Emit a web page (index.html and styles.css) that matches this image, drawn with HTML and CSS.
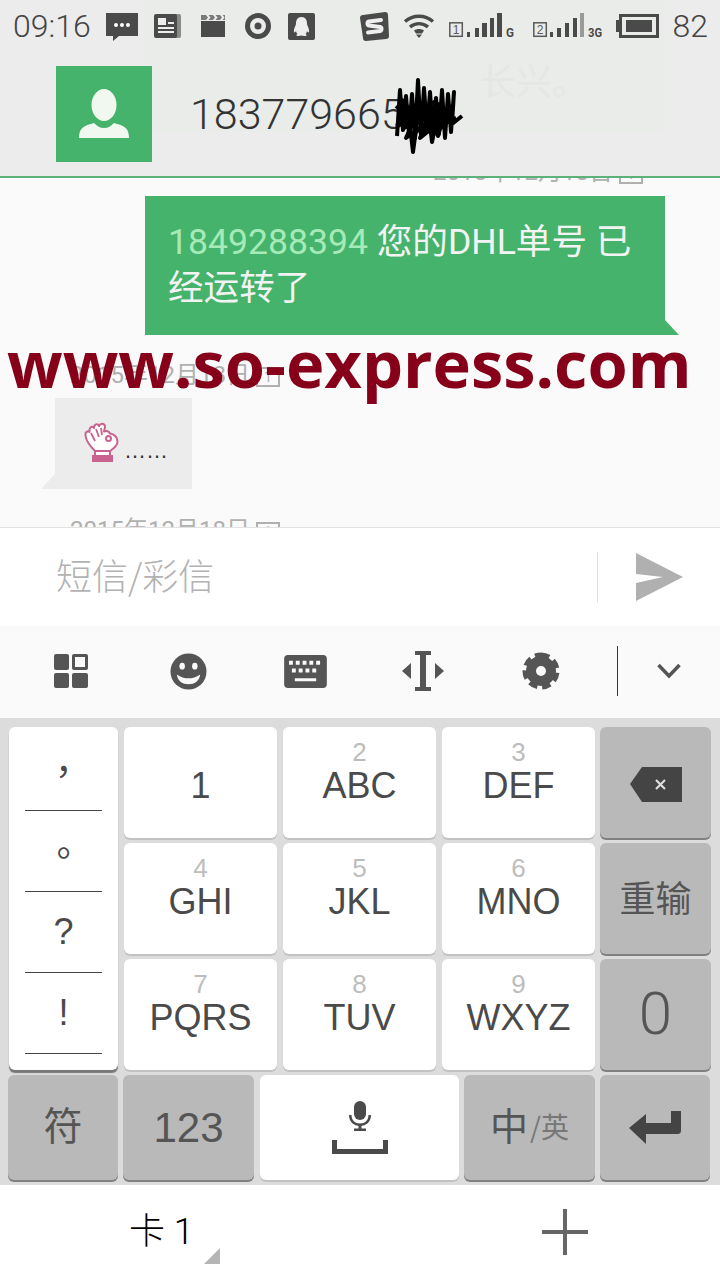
FILE: index.html
```html
<!DOCTYPE html>
<html lang="zh-CN">

<head>
    <meta charset="utf-8">
    <meta name="viewport" content="width=device-width, initial-scale=1">
    <title>短信</title>
    <link rel="stylesheet" href="styles.css">
</head>

<body>
<div class="screen">

    <div class="top">
        <div class="ghost">长兴。</div>
        <div class="status">
            <div class="status-group">
                <span class="status-text">09:16</span>
                <svg class="i-msg" width="32" height="28" viewBox="0 0 32 28"><path fill="#4a4a4a" d="M0 0h32v23H13l-6 5v-5H0z"/><circle cx="10" cy="12" r="2" fill="#fff"/><circle cx="16" cy="12" r="2" fill="#fff"/><circle cx="22" cy="12" r="2" fill="#fff"/></svg>
                <svg class="i-news" width="27" height="24" viewBox="0 0 27 24"><rect x="3" width="24" height="24" rx="2" fill="#8a8a8a"/><rect width="23" height="24" rx="2" fill="#4a4a4a"/><path fill="#eee" d="M4 4h8v7H4zM14 8h6v2h-6zM4 13h16v2H4zM4 17h16v2H4z"/></svg>
                <svg class="i-film" width="24" height="22" viewBox="0 0 24 22"><path fill="#4a4a4a" d="M0 6h24v16H0z"/><path fill="#7a7a7a" d="M0 0h24v5H0z"/><path fill="#eee" d="M5 0l2 2.500L5 5H7.500l2-2.500-2-2.500zM12 0l2 2.500L12 5h2.500l2-2.500-2-2.500zM19 0l2 2.500L19 5h2.500l2-2.500-2-2.500z"/></svg>
                <svg class="i-target" width="26" height="26" viewBox="0 0 26 26"><circle cx="13" cy="13" r="10.500" fill="none" stroke="#4a4a4a" stroke-width="5"/><circle cx="13" cy="13" r="3.500" fill="#4a4a4a"/></svg>
                <svg class="i-qq" width="27" height="27" viewBox="0 0 27 27"><rect width="27" height="27" rx="2" fill="#4a4a4a"/><path fill="#eee" d="M13.500 4c4 0 5.500 3 5.500 6.500 0 2 2.500 5 2 8.500-.5 1-1.500 0-2-1-.2 1.500-1 2.500-1.500 3 1 .5 1.500 1 1 1.500-1 .8-3.500.5-5 0-1.500.5-4 .8-5 0-.5-.5 0-1 1-1.500-.5-.5-1.300-1.500-1.500-3-.5 1-1.500 2-2 1-.5-3.500 2-6.500 2-8.500C8 7 9.500 4 13.500 4z"/></svg>
            </div>
            <div class="status-group status-group-right">
                <svg class="i-sogou" width="29" height="29" viewBox="0 0 29 29"><path fill="#4a4a4a" d="M3 3l22-3c2 0 3 1 3 3l1 21c0 2-1 3-3 3L6 29c-2 0-3-1-3-3L0 6c0-2 1-3 3-3z"/><path fill="none" stroke="#eee" stroke-width="4" stroke-linecap="round" stroke-linejoin="round" d="M21 8L9 9.500c-2 .5-2 3.500 0 4l11 1.500c2 .5 2 3.500 0 4L8 20.500"/></svg>
                <svg class="i-wifi" width="32" height="24" viewBox="0 0 32 24"><g fill="none" stroke="#4a4a4a" stroke-width="3.500"><path d="M2 7.500c8-7 20-7 28 0"/><path d="M7 13c5.500-4.500 12.500-4.500 18 0"/></g><path fill="#4a4a4a" d="M11 16.500c3-2 7-2 10 0l-2 3h-6zM13 20.500h6L16 24z"/></svg>
                <svg class="i-sim" width="66" height="26" viewBox="0 0 66 26">
                    <rect x=".8" y="10.800" width="12.500" height="13.500" fill="none" stroke="#5a5a5a" stroke-width="1.500"/>
                    <text class="sim-num" x="7" y="22" text-anchor="middle">1</text>
                    <path fill="#4a4a4a" d="M18 20h3v5h-3zM26 16h4v9h-4zM33 11h5v14h-5zM41 6h4v19h-4zM48 1h5v24h-5z"/>
                    <text class="sim-net" x="57" y="25" textLength="8" lengthAdjust="spacingAndGlyphs">G</text>
                </svg>
                <svg class="i-sim2" width="70" height="26" viewBox="0 0 70 26">
                    <rect x="1.800" y="10.800" width="12.500" height="13.500" fill="none" stroke="#5a5a5a" stroke-width="1.500"/>
                    <text class="sim-num" x="8" y="22" text-anchor="middle">2</text>
                    <path fill="#4a4a4a" d="M18 20h3v5h-3zM25 16h4v9h-4zM33 11h4v14h-4zM41 6h4v19h-4z"/>
                    <path fill="#9a9a9a" d="M48 1h4v24h-4z"/>
                    <text class="sim-net" x="56" y="25" textLength="14" lengthAdjust="spacingAndGlyphs">3G</text>
                </svg>
                <svg class="i-batt" width="43" height="24" viewBox="0 0 43 24"><path fill="#4a4a4a" d="M0 6h3v12H0z"/><rect x="4.500" y="1.500" width="37" height="21" fill="none" stroke="#4a4a4a" stroke-width="3"/><rect x="10" y="6" width="26" height="12" fill="#4a4a4a"/></svg>
                <span class="status-text">82</span>
            </div>
        </div>

        <div class="contact">
            <div class="avatar">
                <svg width="50" height="50" viewBox="0 0 50 50"><ellipse cx="25" cy="16" rx="12.500" ry="16" fill="#f0f8f0"/><path fill="#f0f8f0" d="M0 49c0-8 3-12 12-14l3-1c3 3 6 5 10 5s7-2 10-5l3 1c9 2 12 6 12 14z"/></svg>
            </div>
            <div class="contact-name">183779665</div>
            <svg class="scribble" width="72" height="80" viewBox="0 0 72 80"><g fill="none" stroke="#000" stroke-width="4" stroke-linejoin="round"><path d="M3 60L6 14 9 54 12 20 15 58 18 18 21 62 24 4 27 60 30 12 33 56 36 16 39 60 42 22 45 58 48 14 51 62 54 18 57 56 60 16 58 48 68 40"/><path d="M4 36L22 30 6 48 30 26 8 42 36 34 10 52 44 28 16 48 50 34 22 56 58 30 30 52 62 42"/><path d="M2 50L20 44 12 62 34 46 26 62 48 44 40 58 56 44"/><path d="M2 30L14 40 8 24 24 44 18 28 34 48 30 26 44 50 40 26 54 46"/><path d="M16 50L19 76 23 46"/><path d="M36 48L38 66 42 46 44 60 48 44"/></g></svg>
        </div>
    </div>

    <div class="messages">
        <div class="date date-right">2015年12月18日 <span class="date-sim">1</span></div>
        <div class="bubble-out">
            <span class="num">1849288394</span> 您的DHL单号 已经运转了
        </div>
        <div class="date">2015年12月18日 <span class="date-sim">1</span></div>
        <div class="bubble-in">
            <svg class="hand" width="35" height="40" viewBox="0 0 35 40">
                <path fill="#fff" stroke="#c9628f" stroke-width="2" stroke-linejoin="round" d="M11 29C7 25 2 19 1.500 13.500 1 10 3.500 8.500 5.500 10 5 6 7.500 3 10 6 10 2 13.500 1 15 4 16.500 .5 21 1 21 5L20 9.500C23 8.500 25 9.500 26 11.500 30 12 33.500 15 33.500 19.500 33.500 24 29 27 26 29z"/>
                <circle cx="24.500" cy="16.500" r="2.500" fill="#fff" stroke="#c9628f" stroke-width="2"/>
                <path fill="none" stroke="#c9628f" stroke-width="1.800" d="M7 11l4 8M12 7l3 8M17 6l1 7"/>
                <path fill="#fff" stroke="#c9628f" stroke-width="2" d="M11 29h15v5H11z"/>
                <path fill="#c9628f" d="M8 33h21v7H8z"/>
            </svg>
            <span class="dots">……</span>
        </div>
        <div class="date date-last">2015年12月18日 <span class="date-sim">1</span></div>
    </div>

    <div class="watermark">www.so-express.com</div>

    <div class="composer">
        <div class="composer-input">短信/彩信</div>
        <div class="composer-line"></div>
        <svg class="send" width="48" height="48" viewBox="0 0 48 48"><path fill="#b0b0b0" d="M1 0l47 24L1 48l0-18 27-6L1 21z"/></svg>
    </div>

    <div class="toolbar">
        <div class="tool"><svg width="36" height="36" viewBox="0 0 36 36"><g fill="#555"><rect x="1" y="1" width="15" height="16" rx="2"/><rect x="1" y="20" width="15" height="15" rx="2"/><rect x="19" y="20" width="16" height="15" rx="2"/><path fill-rule="evenodd" d="M21 1h12a2 2 0 012 2v12a2 2 0 01-2 2H21a2 2 0 01-2-2V3a2 2 0 012-2zm1 3v10h10V4z"/></g></svg></div>
        <div class="tool"><svg width="37" height="37" viewBox="0 0 38 38"><circle cx="19" cy="19" r="18.500" fill="#555"/><ellipse cx="12.500" cy="13.500" rx="2.800" ry="3.500" fill="#fafafa"/><ellipse cx="25.500" cy="13.500" rx="2.800" ry="3.500" fill="#fafafa"/><path fill="#fafafa" d="M7 22c4 3 8 4 12 4s8-1 12-4c-1 7-6 10-12 10S8 29 7 22z"/></svg></div>
        <div class="tool"><svg width="43" height="33" viewBox="0 0 44 34"><rect width="44" height="34" rx="4" fill="#555"/><g fill="#fafafa"><path d="M5 6h4v4H5zM12 6h4v4h-4zM19 6h4v4h-4zM26 6h4v4h-4zM33 6h4v4h-4zM8 14h4v4H8zM15 14h4v4h-4zM22 14h4v4h-4zM29 14h4v4h-4zM11 24h22v3H11z"/></g></svg></div>
        <div class="tool"><svg width="44" height="40" viewBox="0 0 44 40"><path fill="#555" d="M14 0h16v4h-5v32h5v4H14v-4h5V4h-5zM10 12v16L1 20zM34 12v16l9-8z"/></svg></div>
        <div class="tool"><svg width="42" height="42" viewBox="0 0 42 42"><path fill="none" stroke="#555" stroke-width="7" stroke-dasharray="8 4.570" d="M21 6a15 15 0 110 30 15 15 0 010-30z"/><path fill="#555" fill-rule="evenodd" d="M21 6a15 15 0 110 30 15 15 0 010-30zm0 10a5 5 0 100 10 5 5 0 000-10z"/></svg></div>
        <div class="tool-line"></div>
        <div class="tool-more"><svg width="24" height="16" viewBox="0 0 24 16"><path fill="none" stroke="#555" stroke-width="3.500" d="M1.500 2L12 13 22.500 2"/></svg></div>
    </div>

    <div class="keyboard">
        <div class="keys">
            <div class="key-col">
                <div class="key-col-cell cell-comma">，</div>
                <div class="key-col-cell cell-stop">。</div>
                <div class="key-col-cell">?</div>
                <div class="key-col-cell">!</div>
            </div>
            <div class="key"><span class="key-label key-only">1</span></div>
            <div class="key"><span class="key-hint">2</span><span class="key-label">ABC</span></div>
            <div class="key"><span class="key-hint">3</span><span class="key-label">DEF</span></div>
            <div class="key-fn key-side key-back">
                <svg width="52" height="35" viewBox="0 0 52 35"><path fill="#444" d="M12 0h40v35H12L0 17z"/><path stroke="#ddd" stroke-width="2.200" d="M26 13l9 9M35 13l-9 9"/></svg>
            </div>
            <div class="key"><span class="key-hint">4</span><span class="key-label">GHI</span></div>
            <div class="key"><span class="key-hint">5</span><span class="key-label">JKL</span></div>
            <div class="key"><span class="key-hint">6</span><span class="key-label">MNO</span></div>
            <div class="key-fn key-side key-cjk">重输</div>
            <div class="key"><span class="key-hint">7</span><span class="key-label">PQRS</span></div>
            <div class="key"><span class="key-hint">8</span><span class="key-label">TUV</span></div>
            <div class="key"><span class="key-hint">9</span><span class="key-label">WXYZ</span></div>
            <div class="key-fn key-side key-zero">0</div>
        </div>
        <div class="keys-bottom">
            <div class="key-fn key-cjk key-sym">符</div>
            <div class="key-fn key-nums">123</div>
            <div class="key key-space">
                <svg width="56" height="53" viewBox="0 0 56 53"><g fill="#4a4a4a"><rect x="22" y="0" width="12" height="19" rx="6"/><path d="M28 25c-6 0-11-4-11-11h2.500c0 5 3.500 8.500 8.500 8.500s8.500-3.500 8.500-8.500H39c0 7-5 11-11 11z"/><path d="M26.500 24h3v4h-3zM22 27.500h12V30H22z"/><path d="M0 39h5v9h46v-9h5v14H0z"/></g></svg>
            </div>
            <div class="key-fn key-cjk key-lang">中<span class="key-lang-sub">/英</span></div>
            <div class="key-fn">
                <svg width="52" height="33" viewBox="0 0 52 33"><path fill="#444" d="M42 0h10v19c0 3-1 4-4 4H17v10L0 17 17 3v9h25z"/></svg>
            </div>
        </div>
    </div>

    <div class="bottom">
        <div class="sim-tab">卡 1<span class="sim-corner"></span></div>
        <svg class="plus" width="46" height="46" viewBox="0 0 46 46"><path fill="#666" d="M21 0h4v21h21v4H25v21h-4V25H0v-4h21z"/></svg>
    </div>

</div>
</body>

</html>
```

FILE: styles.css
```css
* {
    box-sizing: border-box;
}

html,
body {
    margin: 0;
    padding: 0;
}

body {
    width: 720px;
    height: 1280px;
    overflow: hidden;
    font-family: Roboto, "Noto Sans CJK SC", sans-serif;
}

.screen {
    position: relative;
    width: 720px;
    height: 1280px;
    overflow: hidden;
    display: flex;
    flex-direction: column;
    background: #ffffff;
}

/* top bar */
.top {
    position: relative;
    z-index: 2;
    height: 178px;
    flex: none;
    background: #ececec;
    border-bottom: 2px solid #5cb37a;
}

.ghost {
    position: absolute;
    left: 145px;
    top: 0;
    width: 520px;
    height: 132px;
    padding: 60px 0 0 335px;
    background: #eaecea;
    color: #e4e7e4;
    font-size: 36px;
    line-height: 46px;
}

.status {
    position: relative;
    height: 50px;
    display: flex;
    justify-content: space-between;
    align-items: center;
    padding: 2px 12px 0 13px;
}

.status-group {
    display: flex;
    align-items: center;
    gap: 16px;
}

.status-group-right {
    gap: 14px;
}

.status-text {
    font-size: 32px;
    font-weight: 300;
    line-height: 48px;
    color: #444444;
}

.status-group svg {
    flex: none;
}

.i-msg {
    margin: 1px 0 0 -1px;
}

.i-film {
    margin: 0 3px 0 4px;
}

.i-target,
.i-qq {
    margin-left: 1px;
}

.i-sim {
    margin-bottom: 2px;
}

.i-sim2 {
    margin: 0 0 2px 3px;
}

.sim-num {
    font-family: "Liberation Sans", sans-serif;
    font-size: 12px;
    fill: #5a5a5a;
}

.sim-net {
    font-family: Roboto, sans-serif;
    font-size: 13px;
    font-weight: bold;
    fill: #4a4a4a;
}

.contact {
    position: relative;
    display: flex;
    align-items: center;
    margin-top: 16px;
    padding-left: 56px;
}

.avatar {
    width: 96px;
    height: 96px;
    display: flex;
    align-items: center;
    justify-content: center;
    background: #45b36b;
}

.contact-name {
    margin-left: 38px;
    font-size: 43px;
    font-weight: 300;
    color: #333333;
}

.scribble {
    position: absolute;
    left: 394px;
    top: 10px;
}

/* messages */
.messages {
    height: 349px;
    flex: none;
    overflow: hidden;
    background: #fafafa;
}

.date {
    height: 24px;
    margin-top: 28px;
    padding-left: 70px;
    font-size: 24px;
    line-height: 24px;
    color: #b0b0b0;
    white-space: nowrap;
}

.date-right {
    margin-top: -18px;
    padding-left: 433px;
}

.date-last {
    margin-top: 29px;
}

.date-sim {
    display: inline-block;
    width: 24px;
    height: 20px;
    border: 2px solid #b0b0b0;
    font-size: 14px;
    line-height: 16px;
    text-align: center;
    vertical-align: 1px;
}

.bubble-out {
    position: relative;
    width: 520px;
    height: 139px;
    margin: 12px 0 0 145px;
    padding: 23px 20px 0 23px;
    background: #45b36b;
    color: #f3f3f3;
    font-size: 35.6px;
    line-height: 46px;
}

.bubble-out::after {
    content: "";
    position: absolute;
    right: -14px;
    bottom: 0;
    border-bottom: 15px solid #45b36b;
    border-right: 14px solid transparent;
}

.num {
    color: #a6eab8;
}

.bubble-in {
    position: relative;
    display: flex;
    align-items: flex-end;
    width: 137px;
    height: 91px;
    margin: 11px 0 0 55px;
    padding: 0 0 27px 29px;
    background: #ececec;
}

.bubble-in::after {
    content: "";
    position: absolute;
    left: -14px;
    bottom: 0;
    border-bottom: 15px solid #ececec;
    border-left: 14px solid transparent;
}

.hand {
    flex: none;
}

.dots {
    margin-left: 5px;
    font-family: "Liberation Sans", sans-serif;
    font-size: 22px;
    line-height: 22px;
    color: #333333;
}

/* site stamp over the screenshot */
.watermark {
    position: absolute;
    left: 7px;
    top: 323px;
    z-index: 3;
    font-family: "Open Sans", sans-serif;
    font-size: 65px;
    font-weight: 700;
    line-height: 80px;
    color: #86001a;
    white-space: nowrap;
}

/* input */
.composer {
    height: 99px;
    flex: none;
    display: flex;
    align-items: center;
    padding-left: 56px;
    background: #ffffff;
    border-top: 1px solid #e2e2e2;
}

.composer-input {
    flex: 1;
    padding-bottom: 6px;
    font-family: "Noto Sans CJK SC", sans-serif;
    font-size: 36px;
    font-weight: 300;
    color: #b2b2b2;
}

.composer-line {
    width: 1px;
    height: 50px;
    background: #e0e0e0;
}

.send {
    margin: 0 37px 0 37px;
}

.toolbar {
    height: 92px;
    flex: none;
    display: flex;
    align-items: center;
    padding: 0 0 2px 12px;
    background: #fafafa;
}

.tool {
    width: 117.5px;
    display: flex;
    justify-content: center;
}

.tool-line {
    width: 1px;
    height: 50px;
    margin-left: 17px;
    background: #333333;
}

.tool-more {
    flex: 1;
    display: flex;
    justify-content: center;
}

/* keyboard */
.keyboard {
    height: 466px;
    flex: none;
    padding: 9px 10px 0 8px;
    background: #dcdcdc;
}

.keys {
    display: grid;
    grid-template-columns: 109px 153px 153px 153px 110px;
    grid-auto-rows: 111px;
    gap: 5px 6px;
    margin-left: 1px;
}

.key,
.key-fn {
    display: flex;
    flex-direction: column;
    align-items: center;
    justify-content: center;
    border-radius: 6px;
    color: #4a4a4a;
    font-family: "Liberation Sans", sans-serif;
}

.key {
    position: relative;
    background: #ffffff;
    box-shadow: 0 2px 0 #c2c2c2;
}

.key-fn {
    background: #b9b9b9;
    box-shadow: 0 2px 0 #808080;
    color: #555555;
}

.key-side {
    margin-left: -1px;
}

.key-back {
    padding-top: 4px;
}

.key-col {
    grid-row: span 3;
    padding: 3px 16px 0;
    background: #ffffff;
    border-radius: 6px;
    box-shadow: 0 3px 1px #777777;
}

.key-col-cell {
    height: 81px;
    display: flex;
    align-items: center;
    justify-content: center;
    border-bottom: 1px solid #444444;
    font-family: "Liberation Sans", sans-serif;
    font-size: 36px;
    color: #4a4a4a;
}

.cell-comma,
.cell-stop {
    font-family: "Noto Sans CJK TC", sans-serif;
}

.cell-comma {
    padding-bottom: 2px;
}

.key-hint {
    position: absolute;
    top: 11px;
    left: 0;
    right: 0;
    text-align: center;
    font-size: 26px;
    line-height: 28px;
    color: #bdbdbd;
}

.key-label {
    position: absolute;
    top: 38px;
    left: 0;
    right: 0;
    text-align: center;
    font-size: 36px;
    line-height: 42px;
}

.key-cjk {
    padding-bottom: 6px;
    font-family: "Noto Sans CJK SC", sans-serif;
    font-size: 36px;
}

.key-zero {
    padding-bottom: 2px;
    font-family: Roboto, sans-serif;
    font-size: 60px;
    font-weight: 300;
}

.keys-bottom {
    display: grid;
    grid-template-columns: 110px 131px 200px 131px 110px;
    gap: 5px;
    height: 105px;
    margin-top: 5px;
}

.keys-bottom .key-cjk {
    padding-bottom: 9px;
}

.key-sym {
    font-size: 39px;
}

.key-nums {
    font-size: 42px;
}

.key-space {
    margin-left: 1px;
    background: #ffffff;
}

.key-lang {
    flex-direction: row;
    align-items: center;
    font-size: 38px;
}

.key-lang-sub {
    margin: 6px 0 0 2px;
    font-size: 28px;
    color: #777777;
}

/* bottom row */
.bottom {
    flex: 1;
    display: flex;
    align-items: center;
    padding-bottom: 1px;
    background: #ffffff;
    border-top: 1px solid #dddddd;
}

.sim-tab {
    position: relative;
    width: 220px;
    padding: 0 0 0 129px;
    font-size: 36px;
    font-weight: 300;
    line-height: 40px;
    color: #000000;
}

.sim-corner {
    position: absolute;
    right: 0;
    bottom: -12px;
    border-bottom: 16px solid #b5b5b5;
    border-left: 16px solid transparent;
}

.plus {
    margin-left: 322px;
}
```
